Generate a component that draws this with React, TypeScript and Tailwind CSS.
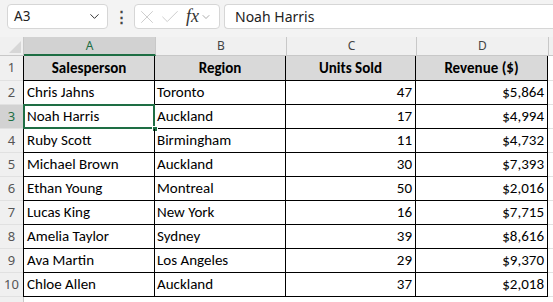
import { ChevronDown, X, Check } from "lucide-react";

const rows = [
  { name: "Chris Jahns", region: "Toronto", units: 47, revenue: "$5,864" },
  { name: "Noah Harris", region: "Auckland", units: 17, revenue: "$4,994" },
  { name: "Ruby Scott", region: "Birmingham", units: 11, revenue: "$4,732" },
  { name: "Michael Brown", region: "Auckland", units: 30, revenue: "$7,393" },
  { name: "Ethan Young", region: "Montreal", units: 50, revenue: "$2,016" },
  { name: "Lucas King", region: "New York", units: 16, revenue: "$7,715" },
  { name: "Amelia Taylor", region: "Sydney", units: 39, revenue: "$8,616" },
  { name: "Ava Martin", region: "Los Angeles", units: 29, revenue: "$9,370" },
  { name: "Chloe Allen", region: "Auckland", units: 37, revenue: "$2,018" },
];

const cellFont = { fontFamily: "Carlito, Calibri, 'Liberation Sans', sans-serif" };
const uiFont = { fontFamily: "'Segoe UI', 'Noto Sans', 'Open Sans', sans-serif" };

function RowNum({ n, selected }: { n?: number; selected?: boolean }) {
  return (
    <div
      className={`w-[24px] shrink-0 flex items-center justify-center border-r border-b border-r-[#c8c8c8] border-b-[#e1e1e1] text-[13px] ${
        selected ? "bg-[#d2d2d2] text-[#1e6e44]" : "bg-[#f0f0f0] text-[#555]"
      }`}
      style={uiFont}
    >
      {n}
    </div>
  );
}

export default function App() {
  return (
    <div className="w-[553px] h-[302px] overflow-hidden bg-white select-none">
      {/* formula bar */}
      <div className="h-[37px] bg-[#f3f3f3] flex items-start pt-[4px] pl-[7px] gap-[4px]" style={uiFont}>
        <div className="w-[101px] h-[25px] bg-white border border-[#d6d6d6] rounded-[4px] flex items-center justify-between pl-[6px] pr-[5px]">
          <span className="text-[13.5px] text-[#222]">A3</span>
          <ChevronDown size={15} strokeWidth={1.6} className="text-[#333]" />
        </div>
        <div className="w-[18px] h-[25px] flex items-center justify-center text-[#444] text-[15px] font-bold">⋮</div>
        <div className="w-[86px] h-[25px] bg-white border border-[#d6d6d6] rounded-[4px] flex items-center pl-[1px] gap-[1px]">
          <X size={22} strokeWidth={0.9} className="text-[#c4c4c4]" />
          <Check size={22} strokeWidth={0.9} className="text-[#c4c4c4]" />
          <span className="ml-[4px] text-[18px] italic text-[#333]" style={{ fontFamily: "'Liberation Serif', serif" }}>
            fx
          </span>
          <ChevronDown size={12} strokeWidth={1.4} className="text-[#888]" />
        </div>
        <div className="flex-1 h-[25px] bg-white border border-[#d6d6d6] border-r-0 rounded-l-[4px] flex items-center pl-[10px]">
          <span className="text-[14px] text-[#222]">Noah Harris</span>
        </div>
      </div>

      {/* column headers */}
      <div className="flex h-[19px] bg-[#f0f0f0] text-[12px] text-[#444]" style={uiFont}>
        <div className="w-[24px] shrink-0 border-r border-b border-[#c8c8c8] relative overflow-hidden">
          <div className="absolute right-[2px] bottom-[2px] w-0 h-0 border-l-[12px] border-l-transparent border-b-[12px] border-b-[#d7d7d7]" />
        </div>
        <div className="w-[132px] shrink-0 flex items-center justify-center bg-[#d2d2d2] text-[#1e6e44] border-b-2 border-b-[#1e6e44] border-r border-r-[#c8c8c8]">
          A
        </div>
        <div className="w-[131px] shrink-0 flex items-center justify-center border-r border-b border-[#c8c8c8]">B</div>
        <div className="w-[130px] shrink-0 flex items-center justify-center border-r border-b border-[#c8c8c8]">C</div>
        <div className="w-[132px] shrink-0 flex items-center justify-center border-r border-b border-[#c8c8c8]">D</div>
        <div className="flex-1 border-b border-[#c8c8c8]" />
      </div>

      {/* header row */}
      <div className="flex h-[25px] text-[15px]" style={cellFont}>
        <RowNum n={1} />
        <div className="w-[132px] shrink-0 flex items-center justify-center bg-[#d9d9d9] border-l border-r border-b border-black font-bold text-black -ml-[1px]">
          Salesperson
        </div>
        <div className="w-[131px] shrink-0 flex items-center justify-center bg-[#d9d9d9] border-r border-b border-black font-bold text-black">
          Region
        </div>
        <div className="w-[130px] shrink-0 flex items-center justify-center bg-[#d9d9d9] border-r border-b border-black font-bold text-black">
          Units Sold
        </div>
        <div className="w-[132px] shrink-0 flex items-center justify-center bg-[#d9d9d9] border-r border-b border-black font-bold text-black">
          Revenue ($)
        </div>
        <div className="flex-1 border-b border-[#e1e1e1]" />
      </div>

      {rows.map((r, i) => {
        const selected = i === 1;
        return (
          <div key={r.name} className="flex h-[24px] text-[15px] text-black" style={cellFont}>
            <RowNum n={i + 2} selected={selected} />
            <div className="w-[132px] shrink-0 -ml-[1px] border-l border-r border-b border-black relative flex items-center pl-[3px]">
              {r.name}
              {selected && (
                <>
                  <div className="absolute -left-[1px] -top-[1px] -right-[1px] -bottom-[1px] border-2 border-[#1e6e44] pointer-events-none" />
                  <div className="absolute -right-[4px] -bottom-[4px] w-[6px] h-[6px] bg-[#1e6e44] border border-white" />
                </>
              )}
            </div>
            <div className="w-[131px] shrink-0 border-r border-b border-black flex items-center pl-[2px]">{r.region}</div>
            <div className="w-[130px] shrink-0 border-r border-b border-black flex items-center justify-end pr-[3px]">
              {r.units}
            </div>
            <div className="w-[132px] shrink-0 border-r border-b border-black flex items-center justify-end pr-[3px]">
              {r.revenue}
            </div>
            <div className="flex-1 border-b border-[#e1e1e1]" />
          </div>
        );
      })}
      <div className="flex h-[24px]">
        <RowNum />
        <div className="flex-1" />
      </div>
    </div>
  );
}
